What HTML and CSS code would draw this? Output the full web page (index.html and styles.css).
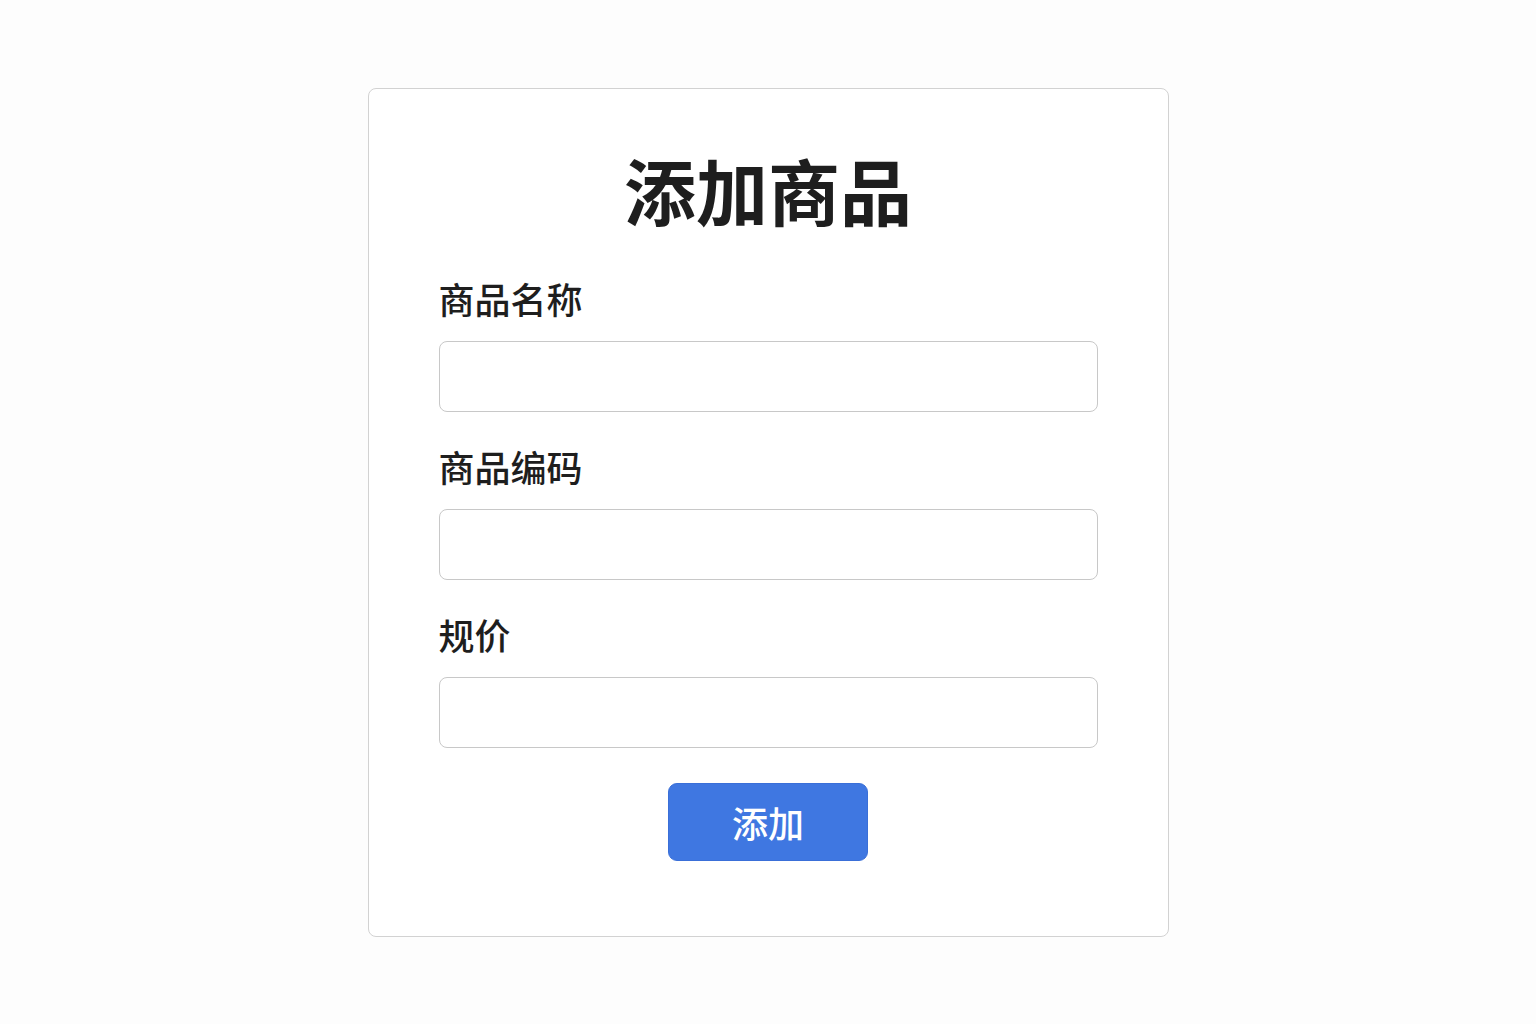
FILE: index.html
```html
<!DOCTYPE html>
<html lang="zh-CN">
<head>
    <meta charset="UTF-8">
    <meta name="viewport" content="width=device-width, initial-scale=1.0">
    <title>添加商品</title>
    <link rel="stylesheet" href="styles.css">
</head>
<body>

    <div class="container">
        <h1>添加商品</h1>

        <form id="product-form">
            <div class="form-group">
                <label for="name">商品名称</label>
                <input type="text" id="name" name="name">
            </div>
            <div class="form-group">
                <label for="code">商品编码</label>
                <input type="text" id="code" name="code">
            </div>
            <div class="form-group">
                <label for="price">规价</label>
                <input type="text" id="price" name="price">
            </div>

            <div class="button-container">
                <button type="submit">添加</button>
            </div>
        </form>
    </div>

</body>
</html>
```

FILE: styles.css
```css
body {
    font-family: "Noto Sans CJK SC", "Noto Sans", sans-serif;
    background-color: #fdfdfd;
    margin: 0;
    padding: 0;
}
.container {
    box-sizing: border-box;
    width: 801px;
    margin: 88px auto 0;
    padding: 57px 70px 75px;
    background-color: #ffffff;
    border: 1px solid #d2d2d2;
    border-radius: 8px;
}
h1 {
    margin: 0 0 45px;
    font-size: 72px;
    line-height: 86px;
    font-weight: 700;
    color: #1e1e1e;
    text-align: center;
}
.form-group {
    margin-bottom: 33px;
}
label {
    display: block;
    margin-bottom: 21px;
    font-size: 36px;
    line-height: 43px;
    font-weight: 500;
    color: #1e1e1e;
}
input {
    box-sizing: border-box;
    display: block;
    width: 100%;
    height: 71px;
    padding: 0 16px;
    border: 1px solid #c8c8c8;
    border-radius: 8px;
    font-family: inherit;
    font-size: 28px;
    background: #ffffff;
}
.button-container {
    display: flex;
    justify-content: center;
    padding-top: 2px;
}
button {
    width: 200px;
    height: 78px;
    background-color: #3f77e1;
    color: #ffffff;
    border: 1px solid #3a6fd8;
    border-radius: 9px;
    font-family: inherit;
    font-size: 36px;
    font-weight: 500;
    cursor: pointer;
}
button:hover {
    background-color: #2f63c8;
}
```
